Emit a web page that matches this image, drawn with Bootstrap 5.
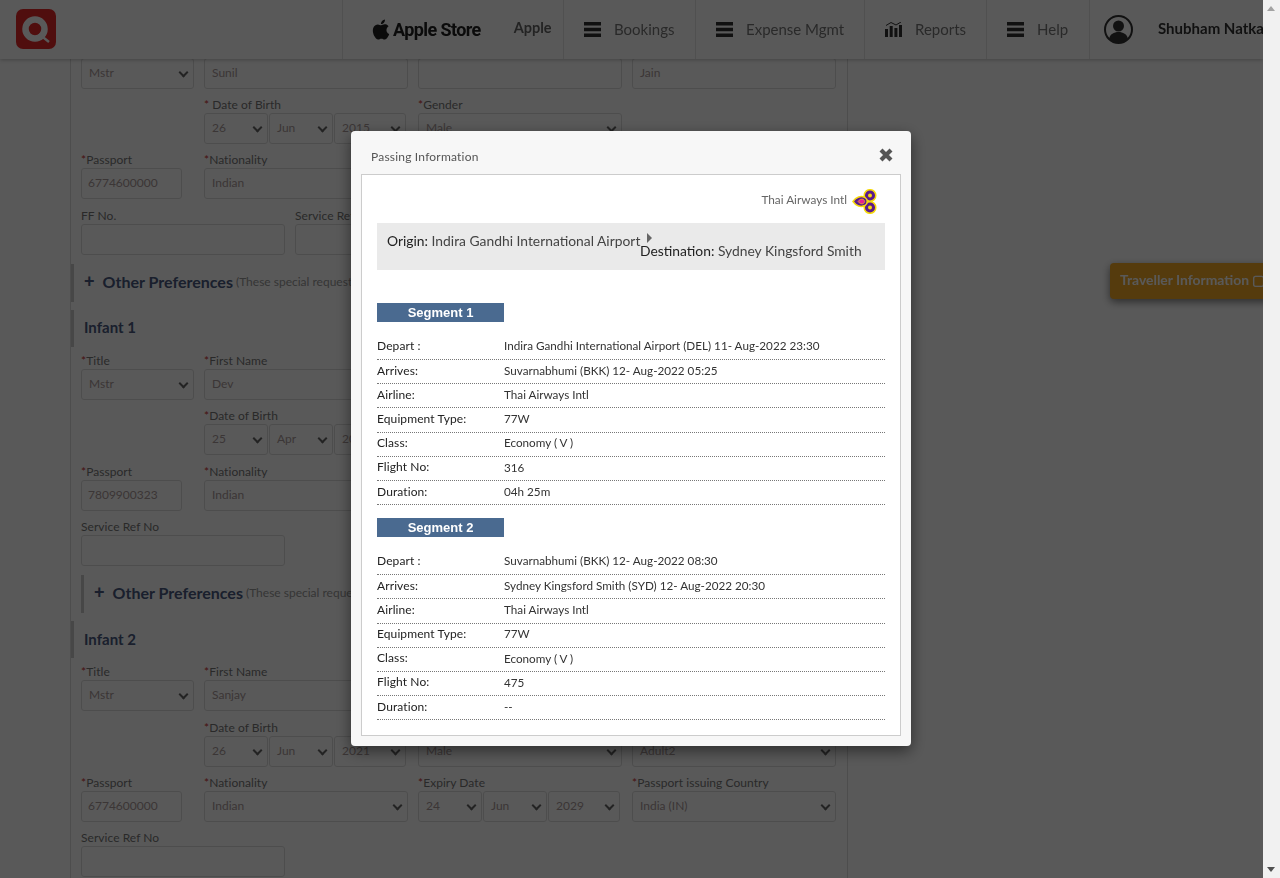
<!DOCTYPE html>
<html lang="en">
<head>
<meta charset="UTF-8">
<title>Passing Information</title>
<link href="https://cdn.jsdelivr.net/npm/bootstrap@5.3.0/dist/css/bootstrap.min.css" rel="stylesheet">
<style>
  html, body { overflow: hidden; height: 878px; }
  body { font-family: Lato, "Open Sans", sans-serif; font-size: 12px; color: #555; background: #fff; }

  /* header */
  .top-bar { position: fixed; top: 0; left: 0; width: 1263px; height: 59px; background: #fff; box-shadow: 0 1px 4px rgba(0,0,0,.25); overflow: hidden; z-index: 1030; flex-wrap: nowrap; }
  .brand-box { width: 342px; padding-left: 16px; margin-top: -1px; flex: none; }
  .top-item { height: 59px; border-left: 1px solid #e4e4e4; flex: none; font-size: 15px; color: #777; white-space: nowrap; }
  .apple-item { width: 221px; padding-left: 28px; }
  .store-name { font-family: Roboto, sans-serif; font-weight: 700; font-size: 18px; letter-spacing: -.6px; color: #222; margin-left: 2px; }
  .apple-name { margin-left: 33px; font-weight: 700; font-size: 14.5px; color: #666; margin-top: -3px; }
  .item-bookings { width: 132px; padding-left: 20px; }
  .item-expense { width: 169px; padding-left: 20px; }
  .item-reports { width: 122px; padding-left: 20px; }
  .item-help { width: 103px; padding-left: 20px; }
  .item-user { padding-left: 14px; }
  .user-name { margin-left: 25px; font-weight: 700; font-size: 15px; color: #333; margin-top: -3px; }
  .bars-ico { width: 17px; height: 15px; margin-right: 13px; }

  /* form behind the modal */
  .form-panel { margin-left: 70px; width: 778px; border-left: 1px solid #ddd; border-right: 1px solid #ddd; padding: 42.7px 10px 0; height: 878px; overflow: hidden; }
  .frm-row { display: flex; gap: 10px; margin-bottom: 9.33px; height: 46px; }
  .frm-row label { display: block; height: 15px; line-height: 13px; margin: 0; font-size: 12px; letter-spacing: .05px; color: #777; white-space: nowrap; }
  .req { color: #c33; }
  .ctl { display: block; height: 31px; border: 1px solid #ddd; border-radius: 3px; padding: 0 7px; line-height: 27px; font-size: 12px; color: #aa9a9a; background: #fff; white-space: nowrap; }
  .ctl.sel { position: relative; }
  .ctl.sel::after { content: ""; position: absolute; right: 6px; top: 10px; width: 7px; height: 7px; border-right: 2px solid #666; border-bottom: 2px solid #666; transform: rotate(45deg); }
  .w-title { width: 113px; }
  .w-main { width: 204px; }
  .w-pass { width: 101px; padding: 0 6px; }
  .w-gap { width: 113px; }
  .date-set { display: flex; gap: 1px; }
  .date-set .ctl { flex: none; width: 64px; }
  .date-set .ctl.yr { width: 72px; }
  .pref-line { height: 38px; margin: 0 0 8px -11px; border-left: 4px solid #ccc; padding-left: 10px; padding-bottom: 2px; color: #999; font-size: 12px; white-space: nowrap; }
  .pref-line.inner { margin-left: 0; border-left-width: 3px; }
  .pref-line b { color: #4a5a80; font-family: "Liberation Sans", sans-serif; font-size: 18px; line-height: 18px; margin: -3px 8px 0 0; }
  .pref-line .pref-name { color: #4a5a80; font-size: 16px; font-weight: 700; margin-right: 3px; }
  .infant-head { height: 37px; margin: 0 0 7px -11px; border-left: 4px solid #ccc; padding-left: 10px; padding-bottom: 2px; color: #4a5a80; font-size: 15px; font-weight: 700; }

  /* side tab */
  .side-tab { position: fixed; top: 263px; left: 1110px; width: 170px; height: 36px; padding-left: 10px; background: #f2a926; border-radius: 4px 0 0 4px; box-shadow: 0 3px 8px rgba(0,0,0,.5); color: #fff; font-size: 13.9px; font-weight: 700; line-height: 34px; z-index: 1030; white-space: nowrap; }

  /* modal */
  .modal-backdrop.show { opacity: .65; width: 1263px; }
  .modal.open-modal { display: block; width: 1263px; overflow: hidden; }
  .open-modal .modal-dialog { max-width: 560px; margin: 131px 0 0 351px; }
  .open-modal .modal-content { border: 0; border-radius: 4px; background: #f7f7f7; box-shadow: 0 5px 15px rgba(0,0,0,.5); height: 615px; padding: 0 10px; }
  .pass-head { height: 43px; padding: 19px 10px 0; font-size: 12px; letter-spacing: .2px; color: #555; line-height: 14px; }
  .close-x { position: absolute; right: 18px; top: 17px; width: 14px; height: 14px; }
  .pass-body { border: 1px solid #ccc; background: #fff; height: 562px; padding: 14px 15px 0; }
  .airline-line { height: 34px; color: #666; font-size: 11.8px; padding-right: 8px; }
  .airline-name { margin-top: 2px; }
  .thai-mark { width: 25px; height: 25px; margin-left: 5px; }
  .route-box { height: 47px; background: #eaeaea; padding-left: 10px; margin-bottom: 33px; color: #444; font-size: 13.85px; line-height: 18px; }
  .route-box strong { font-weight: 400; color: #222; }
  .route-from { width: 253px; flex: none; padding-top: 9px; white-space: nowrap; }
  .route-to { padding-top: 10px; white-space: nowrap; }
  .route-arrow { display: block; width: 0; height: 0; margin-left: 7px; border-left: 5px solid #666; border-top: 5px solid transparent; border-bottom: 5px solid transparent; }
  .route-to-name { display: block; margin-top: -1px; }
  .seg-title { width: 127px; height: 19px; line-height: 19px; background: #4a6a90; color: #fff; text-align: center; font-family: "Liberation Sans", sans-serif; font-weight: 700; font-size: 13px; margin-bottom: 14px; }
  .seg-row { height: 24.17px; padding-bottom: 2px; display: flex; align-items: center; border-bottom: 1px dotted #777; font-size: 11.7px; color: #333; }
  .seg-row:first-child { padding-bottom: 3px; }
  .seg-row span:first-child { width: 127px; flex: none; color: #222; font-size: 12px; letter-spacing: .1px; }
  .seg-list { margin-bottom: 13px; }

  /* browser scrollbar */
  .page-scroll { position: fixed; top: 0; right: 0; width: 17px; height: 878px; background: #f1f1f1; z-index: 1060; }
  .page-scroll i { position: absolute; left: 4px; width: 0; height: 0; border-left: 4.5px solid transparent; border-right: 4.5px solid transparent; }
  .page-scroll .up { top: 6px; border-bottom: 5px solid #a3a3a3; }
  .page-scroll .down { bottom: 6px; border-top: 5px solid #505050; }
</style>
</head>
<body>

<div class="top-bar d-flex align-items-center">
  <div class="brand-box">
    <svg width="40" height="40" viewBox="0 0 40 40"><rect x="0" y="0" width="40" height="40" rx="7" fill="#e62a2a"/><circle cx="19" cy="20" r="9.500" fill="none" stroke="#fff" stroke-width="6.500"/><path d="M23 25l10 8" stroke="#fff" stroke-width="2.500"/></svg>
  </div>
  <div class="top-item apple-item d-flex align-items-center">
    <svg width="20" height="23" viewBox="0 0 24 24"><path fill="#222" d="M12.152 6.896c-.948 0-2.415-1.078-3.96-1.04-2.04.027-3.91 1.183-4.961 3.014-2.117 3.675-.546 9.103 1.519 12.09 1.013 1.454 2.208 3.09 3.792 3.039 1.52-.065 2.09-.987 3.935-.987 1.831 0 2.35.987 3.96.948 1.637-.026 2.676-1.48 3.676-2.948 1.156-1.688 1.636-3.325 1.662-3.415-.039-.013-3.182-1.221-3.22-4.857-.026-3.04 2.48-4.494 2.597-4.559-1.429-2.09-3.623-2.324-4.39-2.376-2-.156-3.675 1.09-4.61 1.09zM15.53 3.83c.843-1.012 1.4-2.427 1.245-3.83-1.207.052-2.662.805-3.532 1.818-.78.896-1.454 2.338-1.273 3.714 1.338.104 2.715-.688 3.559-1.701"/></svg>
    <span class="store-name">Apple Store</span>
    <span class="apple-name">Apple</span>
  </div>
  <div class="top-item item-bookings d-flex align-items-center">
    <svg class="bars-ico" viewBox="0 0 17 15"><path fill="#333" d="M0 0h17v3.4H0zM0 5.8h17v3.4H0zM0 11.6h17V15H0z"/></svg>Bookings
  </div>
  <div class="top-item item-expense d-flex align-items-center">
    <svg class="bars-ico" viewBox="0 0 17 15"><path fill="#333" d="M0 0h17v3.4H0zM0 5.8h17v3.4H0zM0 11.6h17V15H0z"/></svg>Expense Mgmt
  </div>
  <div class="top-item item-reports d-flex align-items-center">
    <svg class="bars-ico" viewBox="0 0 17 15"><path fill="#333" d="M0 7h3v8H0zM4.7 4h3v11h-3zM9.4 6h3v9h-3zM14 3h3v12h-3z"/><path fill="none" stroke="#333" d="M1 3.500l5-3 5 2.500 5-3"/></svg>Reports
  </div>
  <div class="top-item item-help d-flex align-items-center">
    <svg class="bars-ico" viewBox="0 0 17 15"><path fill="#333" d="M0 0h17v3.4H0zM0 5.8h17v3.4H0zM0 11.6h17V15H0z"/></svg>Help
  </div>
  <div class="top-item item-user d-flex align-items-center">
    <svg width="29" height="29" viewBox="0 0 29 29"><circle cx="14.500" cy="14.500" r="13.500" fill="#fff" stroke="#333" stroke-width="2"/><circle cx="14.500" cy="11" r="5.500" fill="#333"/><path fill="#333" d="M5 24c1-5 5-7 9.500-7s8.500 2 9.500 7a13 13 0 0 1-19 0z"/></svg>
    <span class="user-name">Shubham Natkar</span>
  </div>
</div>

<div class="form-panel">
  <div class="frm-row">
    <div class="w-title"><label><span class="req">*</span>Title</label><div class="ctl sel">Mstr</div></div>
    <div class="w-main"><label><span class="req">*</span>First Name</label><div class="ctl">Sunil</div></div>
    <div class="w-main"><label>Middle Name</label><div class="ctl"></div></div>
    <div class="w-main"><label><span class="req">*</span>Last Name</label><div class="ctl">Jain</div></div>
  </div>
  <div class="frm-row">
    <div class="w-gap"></div>
    <div class="w-main"><label><span class="req">*</span> Date of Birth</label>
      <div class="date-set"><div class="ctl sel">26</div><div class="ctl sel">Jun</div><div class="ctl sel yr">2015</div></div></div>
    <div class="w-main"><label><span class="req">*</span>Gender</label><div class="ctl sel">Male</div></div>
  </div>
  <div class="frm-row">
    <div class="w-gap"><label><span class="req">*</span>Passport</label><div class="ctl w-pass">6774600000</div></div>
    <div class="w-main"><label><span class="req">*</span>Nationality</label><div class="ctl sel">Indian</div></div>
  </div>
  <div class="frm-row">
    <div class="w-main"><label>FF No.</label><div class="ctl"></div></div>
    <div class="w-main"><label>Service Ref No</label><div class="ctl"></div></div>
  </div>
  <div class="pref-line d-flex align-items-center"><b>+</b><span class="pref-name">Other Preferences</span> (These special requests are subject to availability)</div>

  <div class="infant-head d-flex align-items-center">Infant 1</div>
  <div class="frm-row">
    <div class="w-title"><label><span class="req">*</span>Title</label><div class="ctl sel">Mstr</div></div>
    <div class="w-main"><label><span class="req">*</span>First Name</label><div class="ctl">Dev</div></div>
  </div>
  <div class="frm-row">
    <div class="w-gap"></div>
    <div class="w-main"><label><span class="req">*</span>Date of Birth</label>
      <div class="date-set"><div class="ctl sel">25</div><div class="ctl sel">Apr</div><div class="ctl sel yr">2021</div></div></div>
  </div>
  <div class="frm-row">
    <div class="w-gap"><label><span class="req">*</span>Passport</label><div class="ctl w-pass">7809900323</div></div>
    <div class="w-main"><label><span class="req">*</span>Nationality</label><div class="ctl sel">Indian</div></div>
  </div>
  <div class="frm-row">
    <div class="w-main"><label>Service Ref No</label><div class="ctl"></div></div>
  </div>
  <div class="pref-line inner d-flex align-items-center"><b>+</b><span class="pref-name">Other Preferences</span> (These special requests are subject to availability)</div>

  <div class="infant-head d-flex align-items-center">Infant 2</div>
  <div class="frm-row">
    <div class="w-title"><label><span class="req">*</span>Title</label><div class="ctl sel">Mstr</div></div>
    <div class="w-main"><label><span class="req">*</span>First Name</label><div class="ctl">Sanjay</div></div>
  </div>
  <div class="frm-row">
    <div class="w-gap"></div>
    <div class="w-main"><label><span class="req">*</span>Date of Birth</label>
      <div class="date-set"><div class="ctl sel">26</div><div class="ctl sel">Jun</div><div class="ctl sel yr">2021</div></div></div>
    <div class="w-main"><label><span class="req">*</span>Gender</label><div class="ctl sel">Male</div></div>
    <div class="w-main"><label>Type</label><div class="ctl sel">Adult2</div></div>
  </div>
  <div class="frm-row">
    <div class="w-gap"><label><span class="req">*</span>Passport</label><div class="ctl w-pass">6774600000</div></div>
    <div class="w-main"><label><span class="req">*</span>Nationality</label><div class="ctl sel">Indian</div></div>
    <div class="w-main"><label><span class="req">*</span>Expiry Date</label>
      <div class="date-set"><div class="ctl sel">24</div><div class="ctl sel">Jun</div><div class="ctl sel yr">2029</div></div></div>
    <div class="w-main"><label><span class="req">*</span>Passport issuing Country</label><div class="ctl sel">India (IN)</div></div>
  </div>
  <div class="frm-row">
    <div class="w-main"><label>Service Ref No</label><div class="ctl"></div></div>
  </div>
</div>

<div class="side-tab">Traveller Information &#9634;</div>

<div class="modal-backdrop fade show"></div>
<div class="modal open-modal">
  <div class="modal-dialog">
    <div class="modal-content">
      <div class="pass-head">Passing Information
        <svg class="close-x" viewBox="0 0 14 14"><path d="M2 2l10 10M12 2L2 12" stroke="#555" stroke-width="4.200"/></svg>
      </div>
      <div class="pass-body">
        <div class="airline-line d-flex justify-content-end align-items-start">
          <span class="airline-name">Thai Airways Intl</span>
          <svg class="thai-mark" viewBox="0 0 25 25">
            <g stroke="#f5d90a" stroke-width="1.500" fill="#5a1a8c">
              <circle cx="18" cy="6.500" r="5.800"/>
              <circle cx="18" cy="18.500" r="5.800"/>
              <path d="M1 12.500C4 8 9 6.500 13 8.500c3 2 3 6 0 8C9 18.500 4 17 1 12.500z"/>
            </g>
            <circle cx="18" cy="6.500" r="2" fill="#f5d90a"/>
            <circle cx="18" cy="18.500" r="2" fill="#f5d90a"/>
            <path fill="#e8208c" stroke="#f5d90a" stroke-width=".6" d="M6 12.500c1.500-2.200 4-3 5.500-2 1.500 1.200 1.500 3 0 4-1.500 1-4 .2-5.500-2z"/>
          </svg>
        </div>
        <div class="route-box d-flex">
          <div class="route-from"><strong>Origin:</strong> Indira Gandhi International Airport</div>
          <div class="route-to"><span class="route-arrow"></span><span class="route-to-name"><strong>Destination:</strong> Sydney Kingsford Smith</span></div>
        </div>

        <div class="seg-title">Segment 1</div>
        <div class="seg-list">
          <div class="seg-row"><span>Depart :</span><span>Indira Gandhi International Airport (DEL) 11- Aug-2022 23:30</span></div>
          <div class="seg-row"><span>Arrives:</span><span>Suvarnabhumi (BKK) 12- Aug-2022 05:25</span></div>
          <div class="seg-row"><span>Airline:</span><span>Thai Airways Intl</span></div>
          <div class="seg-row"><span>Equipment Type:</span><span>77W</span></div>
          <div class="seg-row"><span>Class:</span><span>Economy ( V )</span></div>
          <div class="seg-row"><span>Flight No:</span><span>316</span></div>
          <div class="seg-row"><span>Duration:</span><span>04h 25m</span></div>
        </div>

        <div class="seg-title">Segment 2</div>
        <div class="seg-list">
          <div class="seg-row"><span>Depart :</span><span>Suvarnabhumi (BKK) 12- Aug-2022 08:30</span></div>
          <div class="seg-row"><span>Arrives:</span><span>Sydney Kingsford Smith (SYD) 12- Aug-2022 20:30</span></div>
          <div class="seg-row"><span>Airline:</span><span>Thai Airways Intl</span></div>
          <div class="seg-row"><span>Equipment Type:</span><span>77W</span></div>
          <div class="seg-row"><span>Class:</span><span>Economy ( V )</span></div>
          <div class="seg-row"><span>Flight No:</span><span>475</span></div>
          <div class="seg-row"><span>Duration:</span><span>--</span></div>
        </div>
      </div>
    </div>
  </div>
</div>

<div class="page-scroll"><i class="up"></i><i class="down"></i></div>

<script src="https://cdn.jsdelivr.net/npm/bootstrap@5.3.0/dist/js/bootstrap.bundle.min.js"></script>
</body>
</html>
